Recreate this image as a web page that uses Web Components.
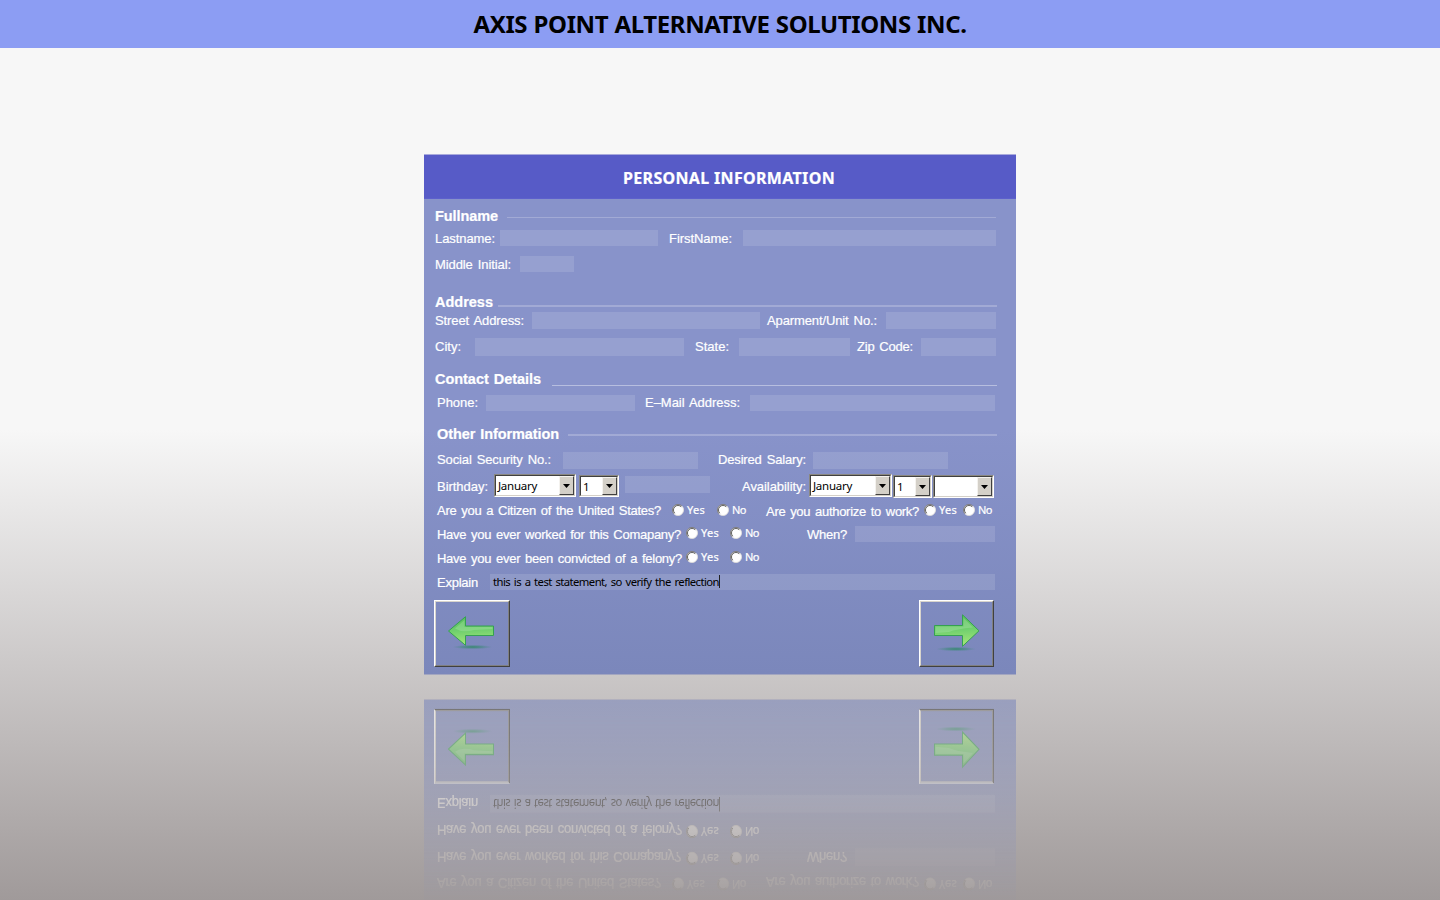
<!DOCTYPE html>
<html lang="en">
<head>
<meta charset="utf-8">
<title>Axis Point Alternative Solutions Inc.</title>
<style>
html,body{margin:0;height:100%;overflow:hidden}
body{font-family:"Liberation Sans",Arial,sans-serif}
</style>
</head>
<body>
<axis-app></axis-app>
<script>
const define = (name, css, html, after) => customElements.define(name, class extends HTMLElement {
  connectedCallback() {
    if (this.shadowRoot) return;
    const root = this.attachShadow({mode: 'open'});
    /* Box properties are reset on every element so that none is inherited. */
    for (const k of ['w', 'h', 'g', 'dy']) {
      this.style.setProperty('--' + k, this.hasAttribute(k) ? this.getAttribute(k) + 'px' : 'initial');
    }
    root.innerHTML = '<style>*{box-sizing:border-box}' + css + '</style>' + (typeof html === 'function' ? html(this) : html);
    if (after) after(this, root);
  }
});

/* Spreads the letters of a text evenly over the width in its w attribute. */
const fit = (host, root) => {
  const s = root.querySelector('span');
  const n = s.textContent.length;
  const d = (parseFloat(host.getAttribute('w')) - s.getBoundingClientRect().width) / n;
  s.style.letterSpacing = d.toFixed(3) + 'px';
};
const item = 'flex:none;box-sizing:border-box;margin-left:var(--g,0);margin-top:var(--dy,0);width:var(--w,auto);';

define('fit-text', `:host{display:block;${item}font:13px/16px "Liberation Sans",Arial,sans-serif;word-spacing:1.5px;color:#fff;white-space:nowrap;-webkit-text-stroke:.2px currentColor}
  :host([kind=head]){font-weight:bold;font-size:14.5px;word-spacing:1px}
  :host([kind=small]){font:11px/14px "Noto Sans",sans-serif}
  :host([kind=dark]){font:11.5px/16px "Noto Sans",sans-serif;color:#000;word-spacing:0;-webkit-text-stroke:0}
  :host([kind=entry]){font:11.3px/16px "Noto Sans",sans-serif;color:#000;word-spacing:1.3px;-webkit-text-stroke:0}
  :host([kind=panel]){font:bold 16px/22px "Noto Sans",sans-serif;word-spacing:0}
  :host([kind=title]){font:bold 24px/34px "Noto Sans",sans-serif;color:#000;word-spacing:.5px;-webkit-text-stroke:0}
  span{display:inline-block;white-space:pre}`, h => `<span>${h.getAttribute('t')}</span>`, fit);

define('text-field', `:host{display:flex;${item}height:var(--h,16px);background:rgba(255,255,255,.12)}`, '<slot></slot>');
define('text-caret', `:host{display:block;width:1px;height:13px;margin-top:1px;background:#222}`, '');
define('rule-line', `:host{display:block;${item}height:var(--h,1px);background:rgba(255,255,255,.22)}`, '');

define('drop-down', `:host{display:flex;${item}height:var(--h,23px);background:#fff;border:1px solid #8a8880;border-right-color:#fff;border-bottom-color:#fff}
  .in{flex:1;display:flex;border:1px solid #404040;border-right-color:#d4d0c8;border-bottom-color:#d4d0c8;padding-left:2px;align-items:center;justify-content:space-between}
  .b{width:15px;height:100%;background:#d4d0c8;border:1px solid #f4f2ee;border-right-color:#404040;border-bottom-color:#404040;display:flex;align-items:center;justify-content:center}
  svg{display:block;flex:none}`,
  h => `<div class="in">${h.getAttribute('t') ? `<fit-text kind="dark" dy="1" w="${h.getAttribute('tw')}" t="${h.getAttribute('t')}"></fit-text>` : '<i></i>'}
  <div class="b"><svg width="7" height="4"><path d="M0 0H7L3.5 4Z" fill="#000"/></svg></div></div>`);

define('radio-choice', `:host{display:flex;${item}align-items:center;gap:3px}svg{display:block;flex:none}`,
  h => `<svg width="12" height="12" viewBox="0 0 12 12"><circle cx="6" cy="6" r="5.6" fill="#fff"/>
  <path d="M2.1 9.9A5.5 5.5 0 0 1 9.9 2.1" fill="none" stroke="#77746e" stroke-width=".9"/><path d="M2.8 9.2A4.5 4.5 0 0 1 9.2 2.8" fill="none" stroke="#3c3c3c" stroke-width=".8"/>
  <path d="M9.9 2.1A5.5 5.5 0 0 1 2.1 9.9" fill="none" stroke="#e4e1da" stroke-width=".8"/></svg>
  <fit-text kind="small" w="${h.getAttribute('t') === 'Yes' ? 18 : 14}" t="${h.getAttribute('t')}"></fit-text>`);

define('form-row', `:host{display:flex;align-items:flex-start;box-sizing:border-box;height:var(--h);padding-left:var(--g,11px)}`, '<slot></slot>');

define('arrow-button', `:host{display:block;${item}height:67px;border:1px solid #fff;border-right-color:#404040;border-bottom-color:#404040}
  .i{height:100%;border:1px solid #d8d4cc;border-right-color:#808080;border-bottom-color:#808080}
  svg{display:block;margin:-2px;overflow:visible}`,
  h => { const r = h.getAttribute('to') === 'next'; return `<div class="i"><svg width="75" height="67" viewBox="0 0 75 67">
  <defs><linearGradient id="g" x1=".2" y1="0" x2=".3" y2="1"><stop offset="0" stop-color="#58bd5c"/><stop offset=".5" stop-color="#70d06e"/><stop offset="1" stop-color="#a5e678"/></linearGradient>
  <radialGradient id="s"><stop offset="0" stop-color="#2d8862" stop-opacity=".9"/><stop offset=".5" stop-color="#3c8878" stop-opacity=".55"/><stop offset="1" stop-color="#4d8a8a" stop-opacity="0"/></radialGradient></defs>
  <ellipse cx="${r ? 37 : 38.5}" cy="${r ? 49 : 47}" rx="20" ry="2.3" fill="url(#s)"/>
  <path d="${r ? 'M15.5 25.5H43.5V14.8L60 30.8L43.5 46.3V35.5H15.5Z' : 'M14.5 31L31.5 16.7V26H59.5V35.5H31.5V45.3Z'}" fill="url(#g)" stroke="#35a052"/>
  <path d="${r ? 'M16.5 26.5H44.5V18L54 27.5Q37 29 30 32L16.5 33Z' : 'M58.5 27H30.5V20L21 28.5Q28 33 40 30L58.5 29Z'}" fill="#fff" opacity=".16"/></svg></div>`; });

define('form-heading', `:host{display:flex;align-items:center;justify-content:center;height:45px;padding:2px 0 0 18px;box-sizing:border-box;background:#575bc7;border-top:1px solid #a9aadc;border-bottom:1px solid #5d60cc}`, '<fit-text kind="panel" w="212" t="PERSONAL INFORMATION"></fit-text>');

define('identity-rows', `:host{display:block}`, `
 <form-row h="31" style="padding-top:9px"><fit-text kind="head" w="63" t="Fullname"></fit-text><rule-line g="9" dy="9" w="489"></rule-line></form-row>
 <form-row h="26"><fit-text dy="1" w="60" t="Lastname:"></fit-text><text-field g="5" w="158"></text-field><fit-text g="11" dy="1" w="63" t="FirstName:"></fit-text><text-field g="11" w="253"></text-field></form-row>
 <form-row h="38"><fit-text dy="1" w="76" t="Middle Initial:"></fit-text><text-field g="9" w="54"></text-field></form-row>
 <form-row h="18"><fit-text kind="head" w="58" t="Address"></fit-text><rule-line g="5" dy="11" w="499" h="2"></rule-line></form-row>
 <form-row h="26"><fit-text dy="1" w="89" t="Street Address:"></fit-text><text-field g="8" w="228" h="17"></text-field><fit-text g="7" dy="1" w="110" t="Aparment/Unit No.:"></fit-text><text-field g="9" w="110" h="17"></text-field></form-row>
 <form-row h="33"><fit-text dy="1" w="26" t="City:"></fit-text><text-field g="14" w="209" h="18"></text-field><fit-text g="11" dy="1" w="34" t="State:"></fit-text><text-field g="10" w="111" h="18"></text-field><fit-text g="7" dy="1" w="56" t="Zip Code:"></fit-text><text-field g="8" w="75" h="18"></text-field></form-row>
 <form-row h="24"><fit-text kind="head" w="106" t="Contact Details"></fit-text><rule-line g="11" dy="14" w="445" style="background:rgba(255,255,255,.4)"></rule-line></form-row>
 <form-row h="31" g="13"><fit-text w="41" t="Phone:"></fit-text><text-field g="8" w="149"></text-field><fit-text g="10" w="95" t="E–Mail Address:"></fit-text><text-field g="10" w="245"></text-field></form-row>
 <form-row h="26" g="13"><fit-text kind="head" w="122" t="Other Information"></fit-text><rule-line g="9" dy="8" w="429" h="2"></rule-line></form-row>
 <form-row h="22" g="13"><fit-text w="114" t="Social Security No.:"></fit-text><text-field g="12" w="135" h="17"></text-field><fit-text g="20" w="88" t="Desired Salary:"></fit-text><text-field g="7" w="135" h="17"></text-field></form-row>
 <form-row h="27" g="13"><fit-text dy="5" w="51" t="Birthday:"></fit-text><drop-down g="6" w="82" t="January" tw="39"></drop-down><drop-down g="3" dy="1" w="40" h="22" t="1" tw="6"></drop-down><text-field g="6" dy="2" w="85" h="17"></text-field><fit-text g="32" dy="5" w="64" t="Availability:"></fit-text><drop-down g="3" w="83" t="January" tw="39"></drop-down><drop-down g="1" dy="1" w="39" t="1" tw="6"></drop-down><drop-down g="1" dy="1" w="61"></drop-down></form-row>`);

define('closing-rows', `:host{display:block}`, `
 <form-row h="25" g="13"><fit-text dy="2" w="224" t="Are you a Citizen of the United States?"></fit-text><radio-choice g="11" dy="2" w="33" t="Yes"></radio-choice><radio-choice g="12" dy="2" w="30" t="No"></radio-choice><fit-text g="19" dy="3" w="153" t="Are you authorize to work?"></fit-text><radio-choice g="5" dy="2" w="33" t="Yes"></radio-choice><radio-choice g="6" dy="2" w="30" t="No"></radio-choice></form-row>
 <form-row h="24" g="13"><fit-text dy="1" w="244" t="Have you ever worked for this Comapany?"></fit-text><radio-choice g="5" w="33" t="Yes"></radio-choice><radio-choice g="11" w="30" t="No"></radio-choice><fit-text g="47" dy="1" w="40" t="When?"></fit-text><text-field g="8" w="140"></text-field></form-row>
 <form-row h="24" g="13"><fit-text dy="1" w="245" t="Have you ever been convicted of a felony?"></fit-text><radio-choice g="4" w="33" t="Yes"></radio-choice><radio-choice g="11" w="30" t="No"></radio-choice></form-row>
 <form-row h="26" g="13"><fit-text dy="1" w="41" t="Explain"></fit-text><text-field g="12" w="505"><fit-text kind="entry" g="3" w="226" t="this is a test statement, so verify the reflection"></fit-text><text-caret></text-caret></text-field></form-row>
 <form-row h="75" g="10"><arrow-button to="previous" w="76"></arrow-button><arrow-button to="next" g="409" w="75"></arrow-button></form-row>`);

define('form-panel', `:host{display:block;box-sizing:border-box;width:592px;height:521px;border-bottom:1px solid #a3a6c0;background:linear-gradient(#8893ca 0,#8893ca 276px,#7b87bb 520px)}`,
  '<form-heading></form-heading><identity-rows></identity-rows><closing-rows></closing-rows>');

/* Lower rows of the form, turned upside down and fading out. */
define('form-reflection', `:host{display:block;box-sizing:border-box;width:592px;height:201px;overflow:hidden;border-top:1px solid #b1b0bd}
  .flip{height:181px;padding-top:6px;transform-origin:0 0;transform:translateY(200.7px) scaleY(-1.115);background:linear-gradient(#848fc4,#7b87bb);
  -webkit-mask-image:linear-gradient(to top,rgba(0,0,0,.59) 0,rgba(0,0,0,.49) 25%,rgba(0,0,0,.35) 50%,rgba(0,0,0,.18) 75%,rgba(0,0,0,.03) 100%);mask-image:linear-gradient(to top,rgba(0,0,0,.59) 0,rgba(0,0,0,.49) 25%,rgba(0,0,0,.35) 50%,rgba(0,0,0,.18) 75%,rgba(0,0,0,.03) 100%)}`,
  '<div class="flip"><closing-rows></closing-rows></div>');

define('title-bar', `:host{display:flex;height:48px;background:#8c9df3;align-items:center;justify-content:center}`,
  '<fit-text kind="title" w="493" t="AXIS POINT ALTERNATIVE SOLUTIONS INC."></fit-text>');

define('axis-app', `:host{display:block;width:1440px;height:900px;overflow:hidden;background:linear-gradient(#f7f7f7 0,#f7f7f7 430px,#a09a9a 900px)}
  main{display:flex;flex-direction:column;align-items:center;gap:24px;padding-top:106px}`,
  '<title-bar></title-bar><main><form-panel></form-panel><form-reflection></form-reflection></main>');
</script>
</body>
</html>
